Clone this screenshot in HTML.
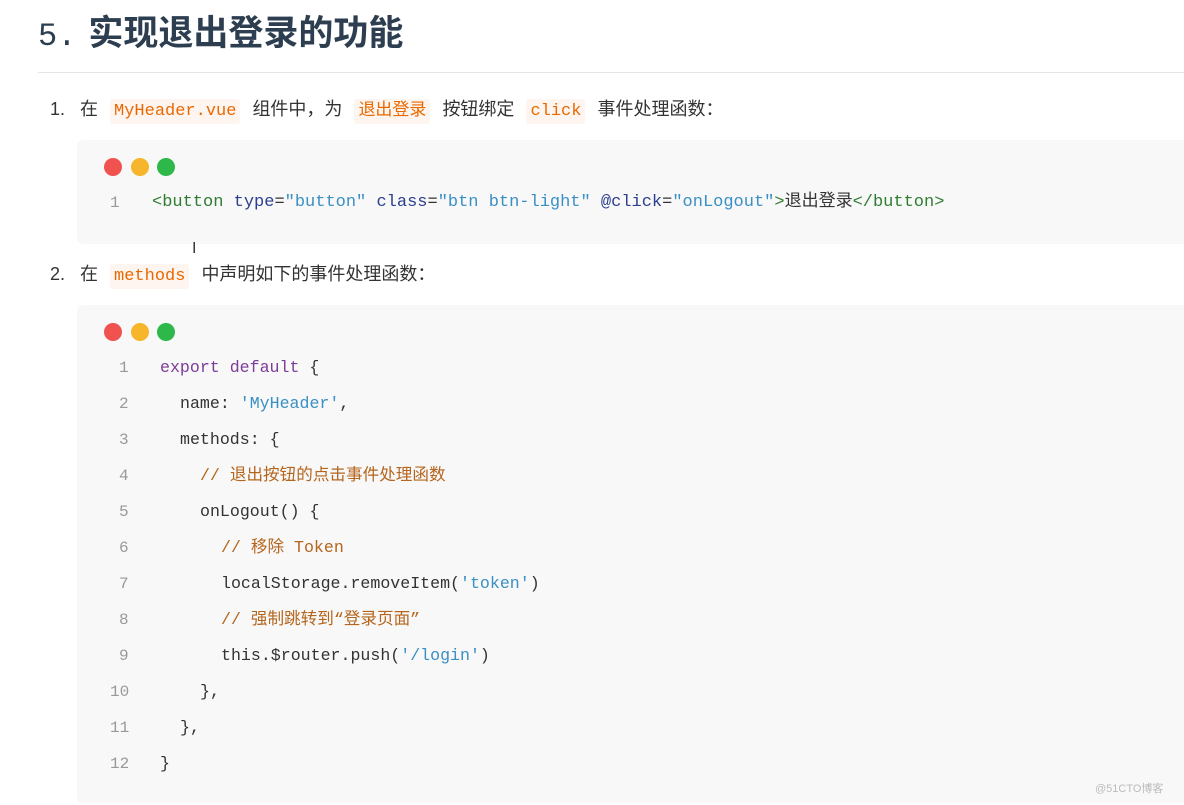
<!DOCTYPE html>
<html><head><meta charset="utf-8"><style>
body{margin:0;width:1184px;height:805px;background:#fff;position:relative;overflow:hidden;font-family:"Liberation Sans","Noto Sans CJK SC",sans-serif;color:#333}
.a{position:absolute;white-space:nowrap;line-height:22px}
h1{position:absolute;left:38px;top:12px;margin:0;font-size:35px;line-height:44px;font-weight:bold;color:#2c3e50;font-family:"Liberation Sans","Noto Sans CJK SC",sans-serif}
h1 .n{font-weight:normal;font-family:"Liberation Mono",monospace;margin-right:12px;font-size:32px}
.hr{position:absolute;left:38px;top:72px;width:1146px;height:1px;background:#e5e5e5}
.p{font-size:18px;color:#333}
.ic{background:#fff5f0;color:#e96900;font-family:"Liberation Mono","Noto Sans CJK SC",monospace;padding:3px 4px;border-radius:3px;font-size:17px;margin:0 12px}
.blk{position:absolute;left:77px;right:0;background:#f8f8f8;border-radius:6px 0 0 6px}
.dot{position:absolute;width:18px;height:18px;border-radius:50%}
.code{font-family:"Liberation Mono","Noto Sans CJK SC",monospace;font-size:16.6px;color:#333}
.ln{color:#999;position:absolute;font-family:"Liberation Mono",monospace;font-size:16px;line-height:22px}
.k{color:#7d3c98}.s{color:#3a8fc4}.c{color:#b5651d}.t{color:#2e7d32}.at{color:#2c3e8f}
</style></head><body>
<h1><span class="n">5.</span>实现退出登录的功能</h1>
<div class="hr"></div>
<div class="a p" style="left:50px;top:98px">1.&nbsp;&nbsp;&nbsp;在<span class="ic">MyHeader.vue</span>组件中，为<span class="ic">退出登录</span>按钮绑定<span class="ic">click</span>事件处理函数：</div>
<div class="blk" style="top:140px;height:104px">
<div class="dot" style="left:27px;top:18px;background:#f0524f"></div>
<div class="dot" style="left:54px;top:18px;background:#f7b52c"></div>
<div class="dot" style="left:80px;top:18px;background:#2fb84a"></div>
<div class="ln" style="left:33px;top:52px">1</div>
<div class="a code" style="left:75px;top:52px;font-size:17px"><span class="t">&lt;button</span> <span class="at">type</span>=<span class="s">"button"</span> <span class="at">class</span>=<span class="s">"btn btn-light"</span> <span class="at">@click</span>=<span class="s">"onLogout"</span><span class="t">&gt;</span>退出登录<span class="t">&lt;/button&gt;</span></div>
</div>
<div class="a" style="left:192px;top:238px;font-size:16px">I</div>
<div class="a p" style="left:50px;top:263px">2.&nbsp;&nbsp;&nbsp;在<span class="ic">methods</span>中声明如下的事件处理函数：</div>
<div class="blk" style="top:305px;height:498px">
<div class="dot" style="left:27px;top:18px;background:#f0524f"></div>
<div class="dot" style="left:54px;top:18px;background:#f7b52c"></div>
<div class="dot" style="left:80px;top:18px;background:#2fb84a"></div>
</div>
<div class="code">
<div class="ln" style="left:119px;top:357px">1</div><div class="a code" style="left:160px;top:357px"><span class="k">export default</span> {</div>
<div class="ln" style="left:119px;top:393px">2</div><div class="a code" style="left:180px;top:393px">name: <span class="s">'MyHeader'</span>,</div>
<div class="ln" style="left:119px;top:429px">3</div><div class="a code" style="left:180px;top:429px">methods: {</div>
<div class="ln" style="left:119px;top:465px">4</div><div class="a code c" style="left:200px;top:465px">// 退出按钮的点击事件处理函数</div>
<div class="ln" style="left:119px;top:501px">5</div><div class="a code" style="left:200px;top:501px">onLogout() {</div>
<div class="ln" style="left:119px;top:537px">6</div><div class="a code c" style="left:221px;top:537px">// 移除 Token</div>
<div class="ln" style="left:119px;top:573px">7</div><div class="a code" style="left:221px;top:573px">localStorage.removeItem(<span class="s">'token'</span>)</div>
<div class="ln" style="left:119px;top:609px">8</div><div class="a code c" style="left:221px;top:609px">// 强制跳转到“登录页面”</div>
<div class="ln" style="left:119px;top:645px">9</div><div class="a code" style="left:221px;top:645px">this.$router.push(<span class="s">'/login'</span>)</div>
<div class="ln" style="left:110px;top:681px">10</div><div class="a code" style="left:200px;top:681px">},</div>
<div class="ln" style="left:110px;top:717px">11</div><div class="a code" style="left:180px;top:717px">},</div>
<div class="ln" style="left:110px;top:753px">12</div><div class="a code" style="left:160px;top:753px">}</div>
</div>
<div class="a" style="left:1095px;top:778px;font-size:11px;color:#bbb">@51CTO博客</div>
</body></html>
